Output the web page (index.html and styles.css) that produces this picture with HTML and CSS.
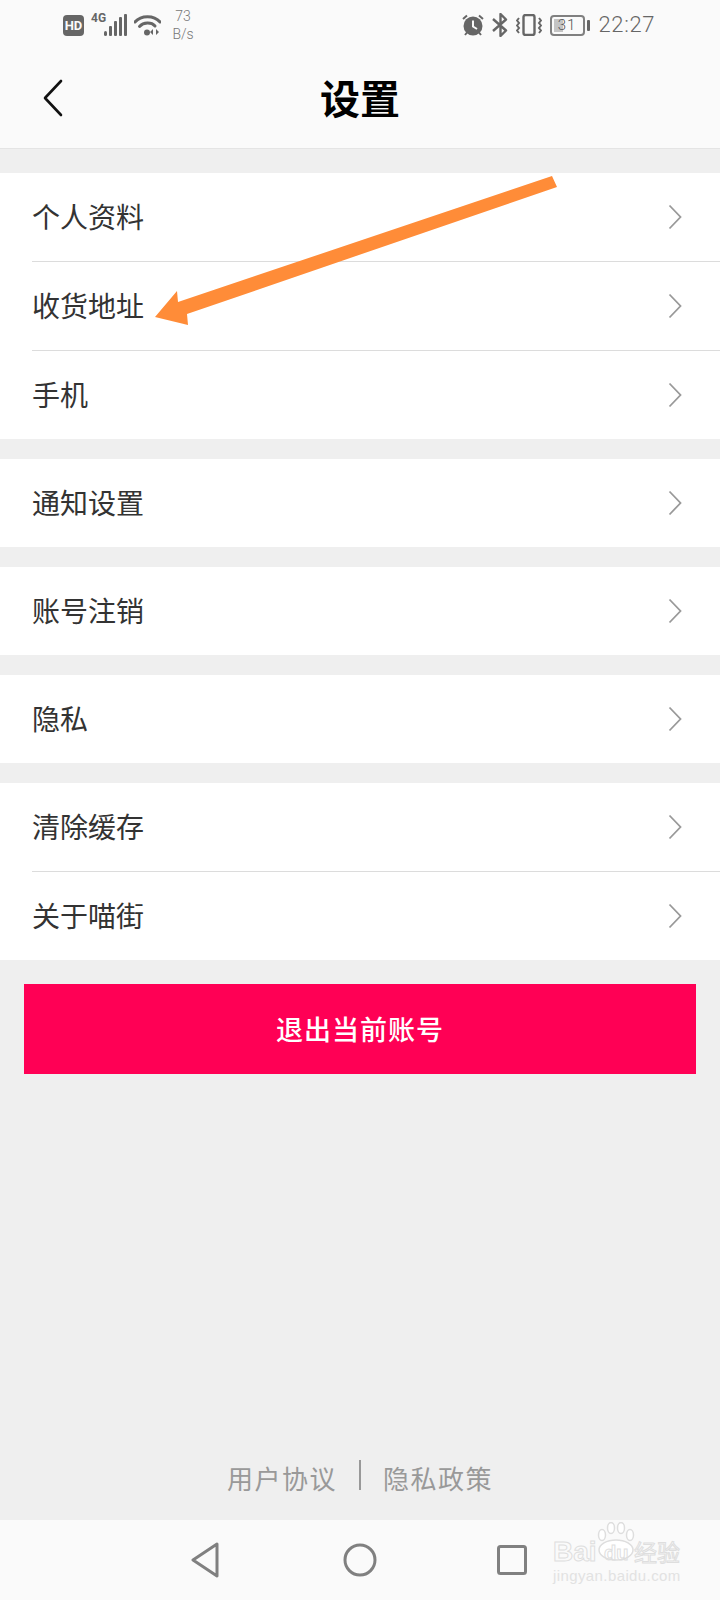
FILE: index.html
```html
<!DOCTYPE html>
<html lang="zh">
<head>
	<meta charset="UTF-8">
	<title>设置</title>
	<link rel="stylesheet" href="styles.css">
</head>
<body>
	<div class="page">
		<div class="top">
			<div class="status">
				<div class="status-left">
					<span class="hd">HD</span>
					<span class="net">
						<span class="net-label">4G</span>
						<svg class="signal" width="23" height="22" viewBox="0 0 23 22"><rect x="0" y="17" width="3" height="5" rx="1.5"/><rect x="5" y="12" width="3" height="10" rx="1"/><rect x="10" y="7" width="3" height="15" rx="1"/><rect x="15" y="3" width="3" height="19" rx="1"/><rect x="20" y="0" width="3" height="22" rx="1"/></svg>
					</span>
					<svg class="wifi" width="27" height="22" viewBox="0 0 27 22"><path d="M1 8C7 1 20 1 26 8" fill="none" stroke="#666" stroke-width="3" stroke-linecap="round"/><path d="M5.500 12.500C9.500 8 17.500 8 21 12" fill="none" stroke="#666" stroke-width="3" stroke-linecap="round"/><circle cx="13" cy="18.500" r="3" fill="#666"/><path d="M19 15v6l-3-3zM22 15v6l3-3z" fill="#666"/></svg>
					<div class="speed"><span>73</span><span>B/s</span></div>
				</div>
				<div class="status-right">
					<svg width="22" height="22" viewBox="0 0 22 22"><path d="M1 5L5 1.500M21 5L17 1.500M5 18.500L3 21M17 18.500L19 21" fill="none" stroke="#666" stroke-width="2"/><circle cx="11" cy="12" r="9.500" fill="#666"/><path d="M11 6.500V12.500L15 15" fill="none" stroke="#fafafa" stroke-width="2"/></svg>
					<svg width="16" height="24" viewBox="0 0 16 24"><path d="M1 6L14 17.500L8.500 23V1L14 6.500L1 18" fill="none" stroke="#666" stroke-width="2.400" stroke-linejoin="round"/></svg>
					<svg width="26" height="22" viewBox="0 0 26 22"><rect x="7.500" y="1" width="11" height="20" rx="2" fill="none" stroke="#666" stroke-width="2.400"/><path d="M3 4L1 6.500L3 9L1 11.500L3 14L1 16.500L3 19M23 4L25 6.500L23 9L25 11.500L23 14L25 16.500L23 19" fill="none" stroke="#666" stroke-width="2"/></svg>
					<div class="battery">
						<div class="battery-body"><span class="battery-fill"></span><span class="battery-num">31</span></div>
						<span class="battery-nib"></span>
					</div>
					<span class="time">22:27</span>
				</div>
			</div>
			<div class="title-bar">
				<svg class="back" width="20" height="38" viewBox="0 0 20 38"><path d="M18 2L2 19L18 36" fill="none" stroke="#111" stroke-width="2.600" stroke-linecap="round" stroke-linejoin="round"/></svg>
				<h1>设置</h1>
			</div>
		</div>

		<div class="groups">
			<ul class="group">
				<li class="row"><span>个人资料</span><svg class="chev" width="14" height="26" viewBox="0 0 14 26"><path d="M1.500 1.500L12.500 13L1.500 24.500" fill="none" stroke="#999" stroke-width="1.800"/></svg></li>
				<li class="row"><span>收货地址</span><svg class="chev" width="14" height="26" viewBox="0 0 14 26"><path d="M1.500 1.500L12.500 13L1.500 24.500" fill="none" stroke="#999" stroke-width="1.800"/></svg></li>
				<li class="row"><span>手机</span><svg class="chev" width="14" height="26" viewBox="0 0 14 26"><path d="M1.500 1.500L12.500 13L1.500 24.500" fill="none" stroke="#999" stroke-width="1.800"/></svg></li>
			</ul>
			<ul class="group">
				<li class="row"><span>通知设置</span><svg class="chev" width="14" height="26" viewBox="0 0 14 26"><path d="M1.500 1.500L12.500 13L1.500 24.500" fill="none" stroke="#999" stroke-width="1.800"/></svg></li>
			</ul>
			<ul class="group">
				<li class="row"><span>账号注销</span><svg class="chev" width="14" height="26" viewBox="0 0 14 26"><path d="M1.500 1.500L12.500 13L1.500 24.500" fill="none" stroke="#999" stroke-width="1.800"/></svg></li>
			</ul>
			<ul class="group">
				<li class="row"><span>隐私</span><svg class="chev" width="14" height="26" viewBox="0 0 14 26"><path d="M1.500 1.500L12.500 13L1.500 24.500" fill="none" stroke="#999" stroke-width="1.800"/></svg></li>
			</ul>
			<ul class="group">
				<li class="row"><span>清除缓存</span><svg class="chev" width="14" height="26" viewBox="0 0 14 26"><path d="M1.500 1.500L12.500 13L1.500 24.500" fill="none" stroke="#999" stroke-width="1.800"/></svg></li>
				<li class="row"><span>关于喵街</span><svg class="chev" width="14" height="26" viewBox="0 0 14 26"><path d="M1.500 1.500L12.500 13L1.500 24.500" fill="none" stroke="#999" stroke-width="1.800"/></svg></li>
			</ul>
		</div>

		<a class="logout" href="javascript:">退出当前账号</a>

		<div class="links">
			<a href="javascript:">用户协议</a>
			<i></i>
			<a href="javascript:">隐私政策</a>
		</div>

		<div class="navbar">
			<svg class="nav-back" width="28" height="36" viewBox="0 0 28 36"><path d="M26 2L2 18L26 34Z" fill="none" stroke="#808080" stroke-width="3" stroke-linejoin="round"/></svg>
			<svg class="nav-home" width="34" height="34" viewBox="0 0 34 34"><circle cx="17" cy="17" r="15" fill="none" stroke="#808080" stroke-width="3"/></svg>
			<svg width="30" height="30" viewBox="0 0 30 30"><rect x="1.500" y="1.500" width="27" height="27" rx="2" fill="none" stroke="#808080" stroke-width="3"/></svg>
		</div>

		<!-- 箭头，盖在列表上面 -->
		<svg class="arrow" width="720" height="400" viewBox="0 0 720 400"><path d="M552 176L557 187L187 314L188 325L155 317L177 291L178 302Z" fill="#ff8c38"/></svg>

		<!-- 水印 -->
		<div class="mark">
			<svg class="paw" width="40" height="40" viewBox="0 0 40 40"><g fill="#fff" stroke="#dedede" stroke-width="1.500"><ellipse cx="6" cy="13" rx="3.500" ry="5.500"/><ellipse cx="15" cy="6" rx="3.500" ry="5.500"/><ellipse cx="25" cy="6" rx="3.500" ry="5.500"/><ellipse cx="34" cy="13" rx="3.500" ry="5.500"/><ellipse cx="20" cy="28" rx="17" ry="10"/></g></svg>
			<span class="mark-bai">Bai</span>
			<span class="mark-du">du</span>
			<span class="mark-cn">经验</span>
			<span class="mark-url">jingyan.baidu.com</span>
		</div>
	</div>
</body>
</html>
```

FILE: styles.css
```css
html, body {
	margin: 0;
	padding: 0;
	background: #efefef;
}
.page {
	position: relative;
	width: 720px;
	height: 1600px;
	display: flex;
	flex-direction: column;
	overflow: hidden;
	font-family: "Noto Sans CJK SC", sans-serif;
}
.top {
	background: #fafafa;
	border-bottom: 1px solid #e4e4e4;
}
.status {
	height: 50px;
	display: flex;
	justify-content: space-between;
	align-items: center;
	padding: 0 65px 0 63px;
}
.status-left, .status-right {
	display: flex;
	align-items: center;
}
.status-left svg {
	fill: #666;
}
.hd {
	width: 21px;
	height: 21px;
	background: #666;
	border-radius: 4px;
	color: #fafafa;
	font: bold 13px/21px "Roboto", sans-serif;
	text-align: center;
	margin-right: 7px;
}
.net {
	position: relative;
	width: 36px;
	height: 22px;
	margin-right: 7px;
	display: flex;
	justify-content: flex-end;
}
.net-label {
	position: absolute;
	left: 0;
	top: -2px;
	font: bold 12px/13px "Roboto", sans-serif;
	color: #666;
}
.speed {
	display: flex;
	flex-direction: column;
	align-items: center;
	width: 22px;
	margin-left: 11px;
	font: 300 14px/18px "Roboto", sans-serif;
	color: #777;
}
.status-right {
	gap: 8px;
}
.battery {
	display: flex;
	align-items: center;
	gap: 2px;
}
.battery-body {
	position: relative;
	width: 35px;
	height: 21px;
	box-sizing: border-box;
	border: 2px solid #808080;
	border-radius: 4px;
	padding: 2px;
}
.battery-fill {
	display: block;
	width: 9px;
	height: 13px;
	background: #c4c4c4;
}
.battery-num {
	position: absolute;
	left: 0;
	right: 0;
	top: 0;
	text-align: center;
	font: 300 15px/17px "Roboto", sans-serif;
	letter-spacing: 1px;
	color: #555;
}
.battery-nib {
	width: 3px;
	height: 11px;
	background: #666;
	border-radius: 1px;
}
.time {
	margin-left: 1px;
	font: 300 22px/26px "Roboto", sans-serif;
	letter-spacing: 0.6px;
	color: #666;
}
.title-bar {
	position: relative;
	height: 98px;
	display: flex;
	align-items: center;
	justify-content: center;
}
.back {
	position: absolute;
	left: 43px;
	top: 29px;
}
h1 {
	margin: 0 0 4px;
	font-size: 40px;
	font-weight: bold;
	color: #000;
	line-height: 94px;
}
.groups {
	margin-top: 24px;
	display: flex;
	flex-direction: column;
	gap: 20px;
}
.group {
	margin: 0;
	padding: 0 0 0 32px;
	list-style: none;
	background: #fff;
}
.row {
	height: 88px;
	display: flex;
	align-items: center;
	justify-content: space-between;
	padding-right: 38px;
	font-size: 28px;
	color: #333;
	border-top: 1px solid #dcdcdc;
}
.row:first-child {
	border-top: none;
}
.row span {
	margin-bottom: 2px;
}
.logout {
	display: block;
	margin: 24px 24px 0;
	height: 90px;
	line-height: 90px;
	background: #ff0055;
	color: #fff;
	text-align: center;
	text-decoration: none;
	font-size: 27px;
	font-weight: 500;
	letter-spacing: 1px;
}
.links {
	margin-top: auto;
	height: 60px;
	display: flex;
	align-items: center;
	justify-content: center;
	gap: 22px;
	font-size: 26px;
	letter-spacing: 1.5px;
}
.links a {
	margin-top: 4px;
	color: #999;
	text-decoration: none;
}
.links i {
	width: 2px;
	height: 30px;
	background: #999;
}
.navbar {
	margin-top: 15px;
	height: 80px;
	background: #fafafa;
	display: flex;
	align-items: center;
	padding-left: 191px;
}
.nav-home {
	margin: 0 120px 0 124px;
}
.arrow {
	position: absolute;
	left: 0;
	top: 0;
	filter: blur(0.5px);
}
.mark {
	position: absolute;
	left: 553px;
	top: 1522px;
	width: 130px;
	height: 62px;
	font-family: "Liberation Sans", "Noto Sans CJK SC", sans-serif;
	color: transparent;
	-webkit-text-stroke: 1px #dedede;
}
.paw {
	position: absolute;
	left: 43px;
	top: 0;
}
.mark-bai, .mark-du, .mark-cn {
	position: absolute;
	line-height: 30px;
	white-space: nowrap;
}
.mark-bai {
	left: 0;
	top: 15px;
	font-size: 28px;
	font-weight: bold;
}
.mark-du {
	left: 51px;
	top: 16px;
	font-size: 20px;
	font-weight: bold;
}
.mark-cn {
	left: 81px;
	top: 16px;
	font-size: 23px;
}
.mark-url {
	position: absolute;
	left: 0;
	top: 45px;
	font-size: 15px;
	line-height: 18px;
	letter-spacing: 0.4px;
	white-space: nowrap;
	color: #e2e2e2;
	-webkit-text-stroke: 0;
}
```
